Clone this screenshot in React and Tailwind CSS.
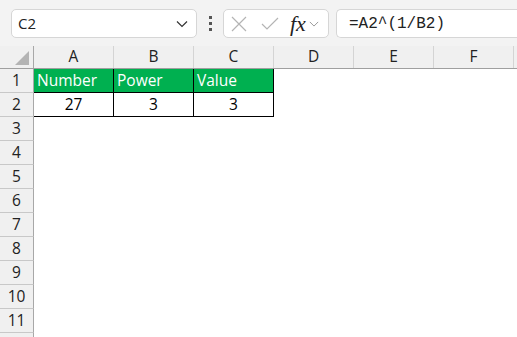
import React from "react";

const COLS = ["A", "B", "C", "D", "E", "F"];
const ROWS = [1, 2, 3, 4, 5, 6, 7, 8, 9, 10, 11, 12];

const data = {
  1: ["Number", "Power", "Value"],
  2: ["27", "3", "3"],
};

function Chevron({ className = "" }) {
  return (
    <svg width="12" height="8" viewBox="0 0 12 8" className={className}>
      <path d="M1 1.5 L6 6.5 L11 1.5" fill="none" stroke="currentColor" strokeWidth="1.2" />
    </svg>
  );
}

function FormulaBar() {
  return (
    <div className="h-[46px] bg-[#f3f3f3] flex items-center pt-[1px]" style={{ fontFamily: "'Open Sans', 'Noto Sans', sans-serif" }}>
      {/* name box */}
      <div className="ml-[11px] w-[186px] h-[29px] bg-white border border-[#d6d6d6] rounded-[5px] flex items-center justify-between pl-[6px] pr-[8px]">
        <span className="text-[15px] text-[#222]">C2</span>
        <Chevron className="text-[#333]" />
      </div>
      {/* dots */}
      <div className="w-[26px] flex flex-col items-center gap-[3px]">
        <span className="w-[3px] h-[3px] bg-[#555]"></span>
        <span className="w-[3px] h-[3px] bg-[#555]"></span>
        <span className="w-[3px] h-[3px] bg-[#555]"></span>
      </div>
      {/* buttons */}
      <div className="w-[106px] h-[29px] bg-white border border-[#d6d6d6] rounded-[5px] flex items-center pl-[7px]">
        <svg width="16" height="16" viewBox="0 0 16 16">
          <path d="M1 1 L15 15 M15 1 L1 15" stroke="#b4b4b4" strokeWidth="1.2" fill="none" />
        </svg>
        <svg width="18" height="14" viewBox="0 0 18 14" className="ml-[14px]">
          <path d="M1 7 L6 12 L17 1" stroke="#b4b4b4" strokeWidth="1.2" fill="none" />
        </svg>
        <span className="ml-[11px] text-[22px] italic text-[#222] leading-none" style={{ fontFamily: "'Liberation Serif', serif" }}>
          fx
        </span>
        <Chevron className="ml-[3px] text-[#9a9a9a] w-[10px]" />
      </div>
      {/* formula input */}
      <div className="ml-[7px] flex-1 h-[29px] bg-white border border-[#d6d6d6] border-r-0 rounded-l-[5px] flex items-center pl-[12px]">
        <span className="text-[16px] text-[#222]" style={{ fontFamily: "'Liberation Mono', monospace" }}>
          =A2^(1/B2)
        </span>
      </div>
    </div>
  );
}

function Grid() {
  return (
    <div className="bg-white" style={{ fontFamily: "'Open Sans', 'Noto Sans', sans-serif" }}>
      {/* column headers */}
      <div className="flex h-[23px] bg-[#f0f0f0] border-b border-[#9f9f9f]">
        <div className="w-[34px] shrink-0 border-r border-[#a8a8a8] relative">
          <svg width="14" height="14" viewBox="0 0 14 14" className="absolute right-[4px] bottom-[3px]">
            <path d="M14 0 L14 14 L0 14 Z" fill="#b4b4b4" />
          </svg>
        </div>
        {COLS.map((c) => (
          <div key={c} className="w-[80px] shrink-0 border-r border-[#d4d4d4] flex items-center justify-center text-[15.5px] text-[#222]">
            {c}
          </div>
        ))}
      </div>
      {ROWS.map((r) => (
        <div key={r} className="flex h-[24px]">
          <div className="w-[34px] shrink-0 bg-[#f0f0f0] border-r border-b border-r-[#a8a8a8] border-b-[#c8c8c8] flex items-center justify-center text-[15.5px] text-[#222]">
            {r < 12 ? r : ""}
          </div>
          {COLS.map((c, i) => {
            const v = data[r] ? data[r][i] : undefined;
            const inTable = data[r] && i < 3;
            if (!inTable) return <div key={c} className="w-[80px] shrink-0"></div>;
            if (r === 1)
              return (
                <div key={c} className="w-[80px] shrink-0 bg-[#00b050] border-r border-b border-black flex items-center pl-[3px] text-[15.5px] text-white">
                  {v}
                </div>
              );
            return (
              <div key={c} className="w-[80px] shrink-0 bg-white border-r border-b border-black flex items-center justify-center text-[15.5px] text-black">
                {v}
              </div>
            );
          })}
        </div>
      ))}
    </div>
  );
}

export default function App() {
  return (
    <div className="w-[517px] h-[337px] overflow-hidden bg-white">
      <FormulaBar />
      <Grid />
    </div>
  );
}
